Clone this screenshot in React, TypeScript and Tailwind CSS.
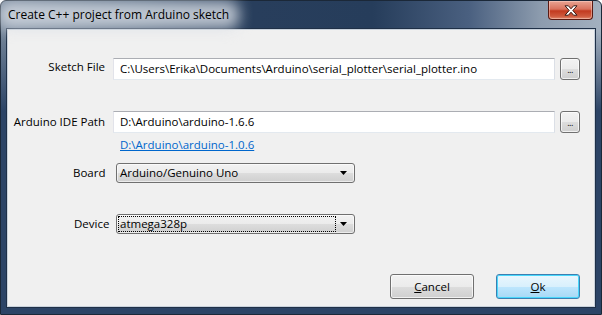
const ui = "font-['Segoe_UI','Open_Sans',sans-serif] text-[11.5px] leading-none text-black";

function BrowseButton() {
  return (
    <div className="ml-[5px] flex h-[22px] w-[20px] items-end justify-center rounded-[3px] border border-[#707070] bg-[linear-gradient(to_bottom,#f2f2f2_0%,#ebebeb_50%,#dddddd_51%,#cfcfcf_100%)] pb-[5px] shadow-[inset_0_0_0_1px_rgba(255,255,255,0.7)]">
      <span className="text-[9px] leading-none tracking-[-0.5px]">...</span>
    </div>
  );
}

function TextBox({ value, width }: { value: string; width: number }) {
  return (
    <div
      className="flex h-[22px] items-center border border-[#e3e9ef] border-t-[#abadb3] border-l-[#e2e3ea] border-r-[#dbdfe6] bg-white pl-[6px]"
      style={{ width }}
    >
      <span className="whitespace-nowrap">{value}</span>
    </div>
  );
}

function Arrow() {
  return (
    <svg width="7" height="4" viewBox="0 0 7 4" className="mr-[7px]">
      <path d="M0 0h7L3.5 4z" fill="#000" />
    </svg>
  );
}

function ComboBox({ value, focused }: { value: string; focused?: boolean }) {
  return (
    <div className="flex h-[20px] w-[239px] items-center justify-between rounded-[3px] border border-[#707070] bg-[linear-gradient(to_bottom,#f2f2f2_0%,#ebebeb_50%,#dddddd_51%,#cfcfcf_100%)] shadow-[inset_0_0_0_1px_rgba(255,255,255,0.6)]">
      {focused ? (
        <div className="ml-[1px] flex h-[16px] w-[218px] items-center border border-dotted border-black pl-[1px]">
          <span>{value}</span>
        </div>
      ) : (
        <span className="pl-[3px]">{value}</span>
      )}
      <Arrow />
    </div>
  );
}

export default function App() {
  return (
    <div
      className={`${ui} flex h-[315px] w-[602px] flex-col rounded-t-[6px] border border-[#1b2838] [background:linear-gradient(to_bottom,rgba(44,68,102,0)_30px,#2c4466_110px),linear-gradient(to_right,#75869a_0%,#52677f_22%,#283e5c_42%,#263d5b_62%,#4a6080_78%,#8d9cae_90%,#a3b0bf_100%)]`}
    >
      {/* title bar */}
      <div className="flex h-[28px] items-start justify-between">
        <div className="relative ml-[7px] mt-[8px]">
          <div className="absolute -inset-x-[10px] -inset-y-[8px] rounded-[10px] bg-[#d9dfe6]/80 blur-[7px]" />
          <span className="relative text-[12px] text-black">Create C++ project from Arduino sketch</span>
        </div>
        <div className="mr-[8px] flex h-[19px] w-[45px] items-center justify-center rounded-b-[4px] border border-t-0 border-[#5a1a12] bg-[linear-gradient(to_bottom,#e9a493_0%,#d9725d_45%,#c23a20_55%,#cf5a3e_85%,#e08a6f_100%)] shadow-[inset_0_0_0_1px_rgba(255,220,210,0.45)]">
          <svg width="14" height="11" viewBox="0 0 14 11">
            <path
              d="M1 0.8h3.4L7 3.8 9.6 0.8H13L8.8 5.5 13 10.2H9.6L7 7.2 4.4 10.2H1L5.2 5.5z"
              fill="#fff"
              stroke="#3b1a14"
              strokeWidth="1"
              strokeLinejoin="round"
            />
          </svg>
        </div>
      </div>

      {/* client */}
      <div className="flex flex-1 px-[6px] pb-[7px]">
        <div className="flex flex-1 flex-col border border-[#c9d2dc] bg-[#f0f0f0] pt-[28px] shadow-[0_0_0_1px_#1f3047]">
          <div className="flex items-center">
            <div className="w-[97px] pb-[5px] text-right">Sketch File</div>
            <div className="ml-[8px]">
              <TextBox value="C:\Users\Erika\Documents\Arduino\serial_plotter\serial_plotter.ino" width={442} />
            </div>
            <BrowseButton />
          </div>

          <div className="mt-[31px] flex items-center">
            <div className="w-[97px] text-right">Arduino IDE Path</div>
            <div className="ml-[8px]">
              <TextBox value="D:\Arduino\arduino-1.6.6" width={442} />
            </div>
            <BrowseButton />
          </div>

          <div className="mt-[5px] pl-[112px]">
            <span className="text-[#0066cc] underline leading-[14px]">D:\Arduino\arduino-1.0.6</span>
          </div>

          <div className="mt-[11px] flex items-center pl-[65px]">
            <div className="w-[43px]">Board</div>
            <ComboBox value="Arduino/Genuino Uno" />
          </div>

          <div className="mt-[31px] flex items-center pl-[66px]">
            <div className="w-[42px]">Device</div>
            <ComboBox value="atmega328p" focused />
          </div>

          <div className="mt-[40px] flex justify-end gap-[22px] pr-[14px]">
            <div className="flex h-[25px] w-[84px] items-center justify-center rounded-[3px] border border-[#707070] bg-[linear-gradient(to_bottom,#f2f2f2_0%,#ebebeb_50%,#dddddd_51%,#cfcfcf_100%)] shadow-[inset_0_0_0_1px_rgba(255,255,255,0.7)]">
              <span>
                <span className="underline">C</span>ancel
              </span>
            </div>
            <div className="flex h-[25px] w-[84px] items-center justify-center rounded-[3px] border border-[#3c7fb1] bg-[linear-gradient(to_bottom,#eaf6fd_0%,#d9f0fc_50%,#bee6fd_51%,#a7d9f5_100%)] shadow-[inset_0_0_0_1px_#48d7fb]">
              <span>
                <span className="underline">O</span>k
              </span>
            </div>
          </div>
        </div>
      </div>
    </div>
  );
}
